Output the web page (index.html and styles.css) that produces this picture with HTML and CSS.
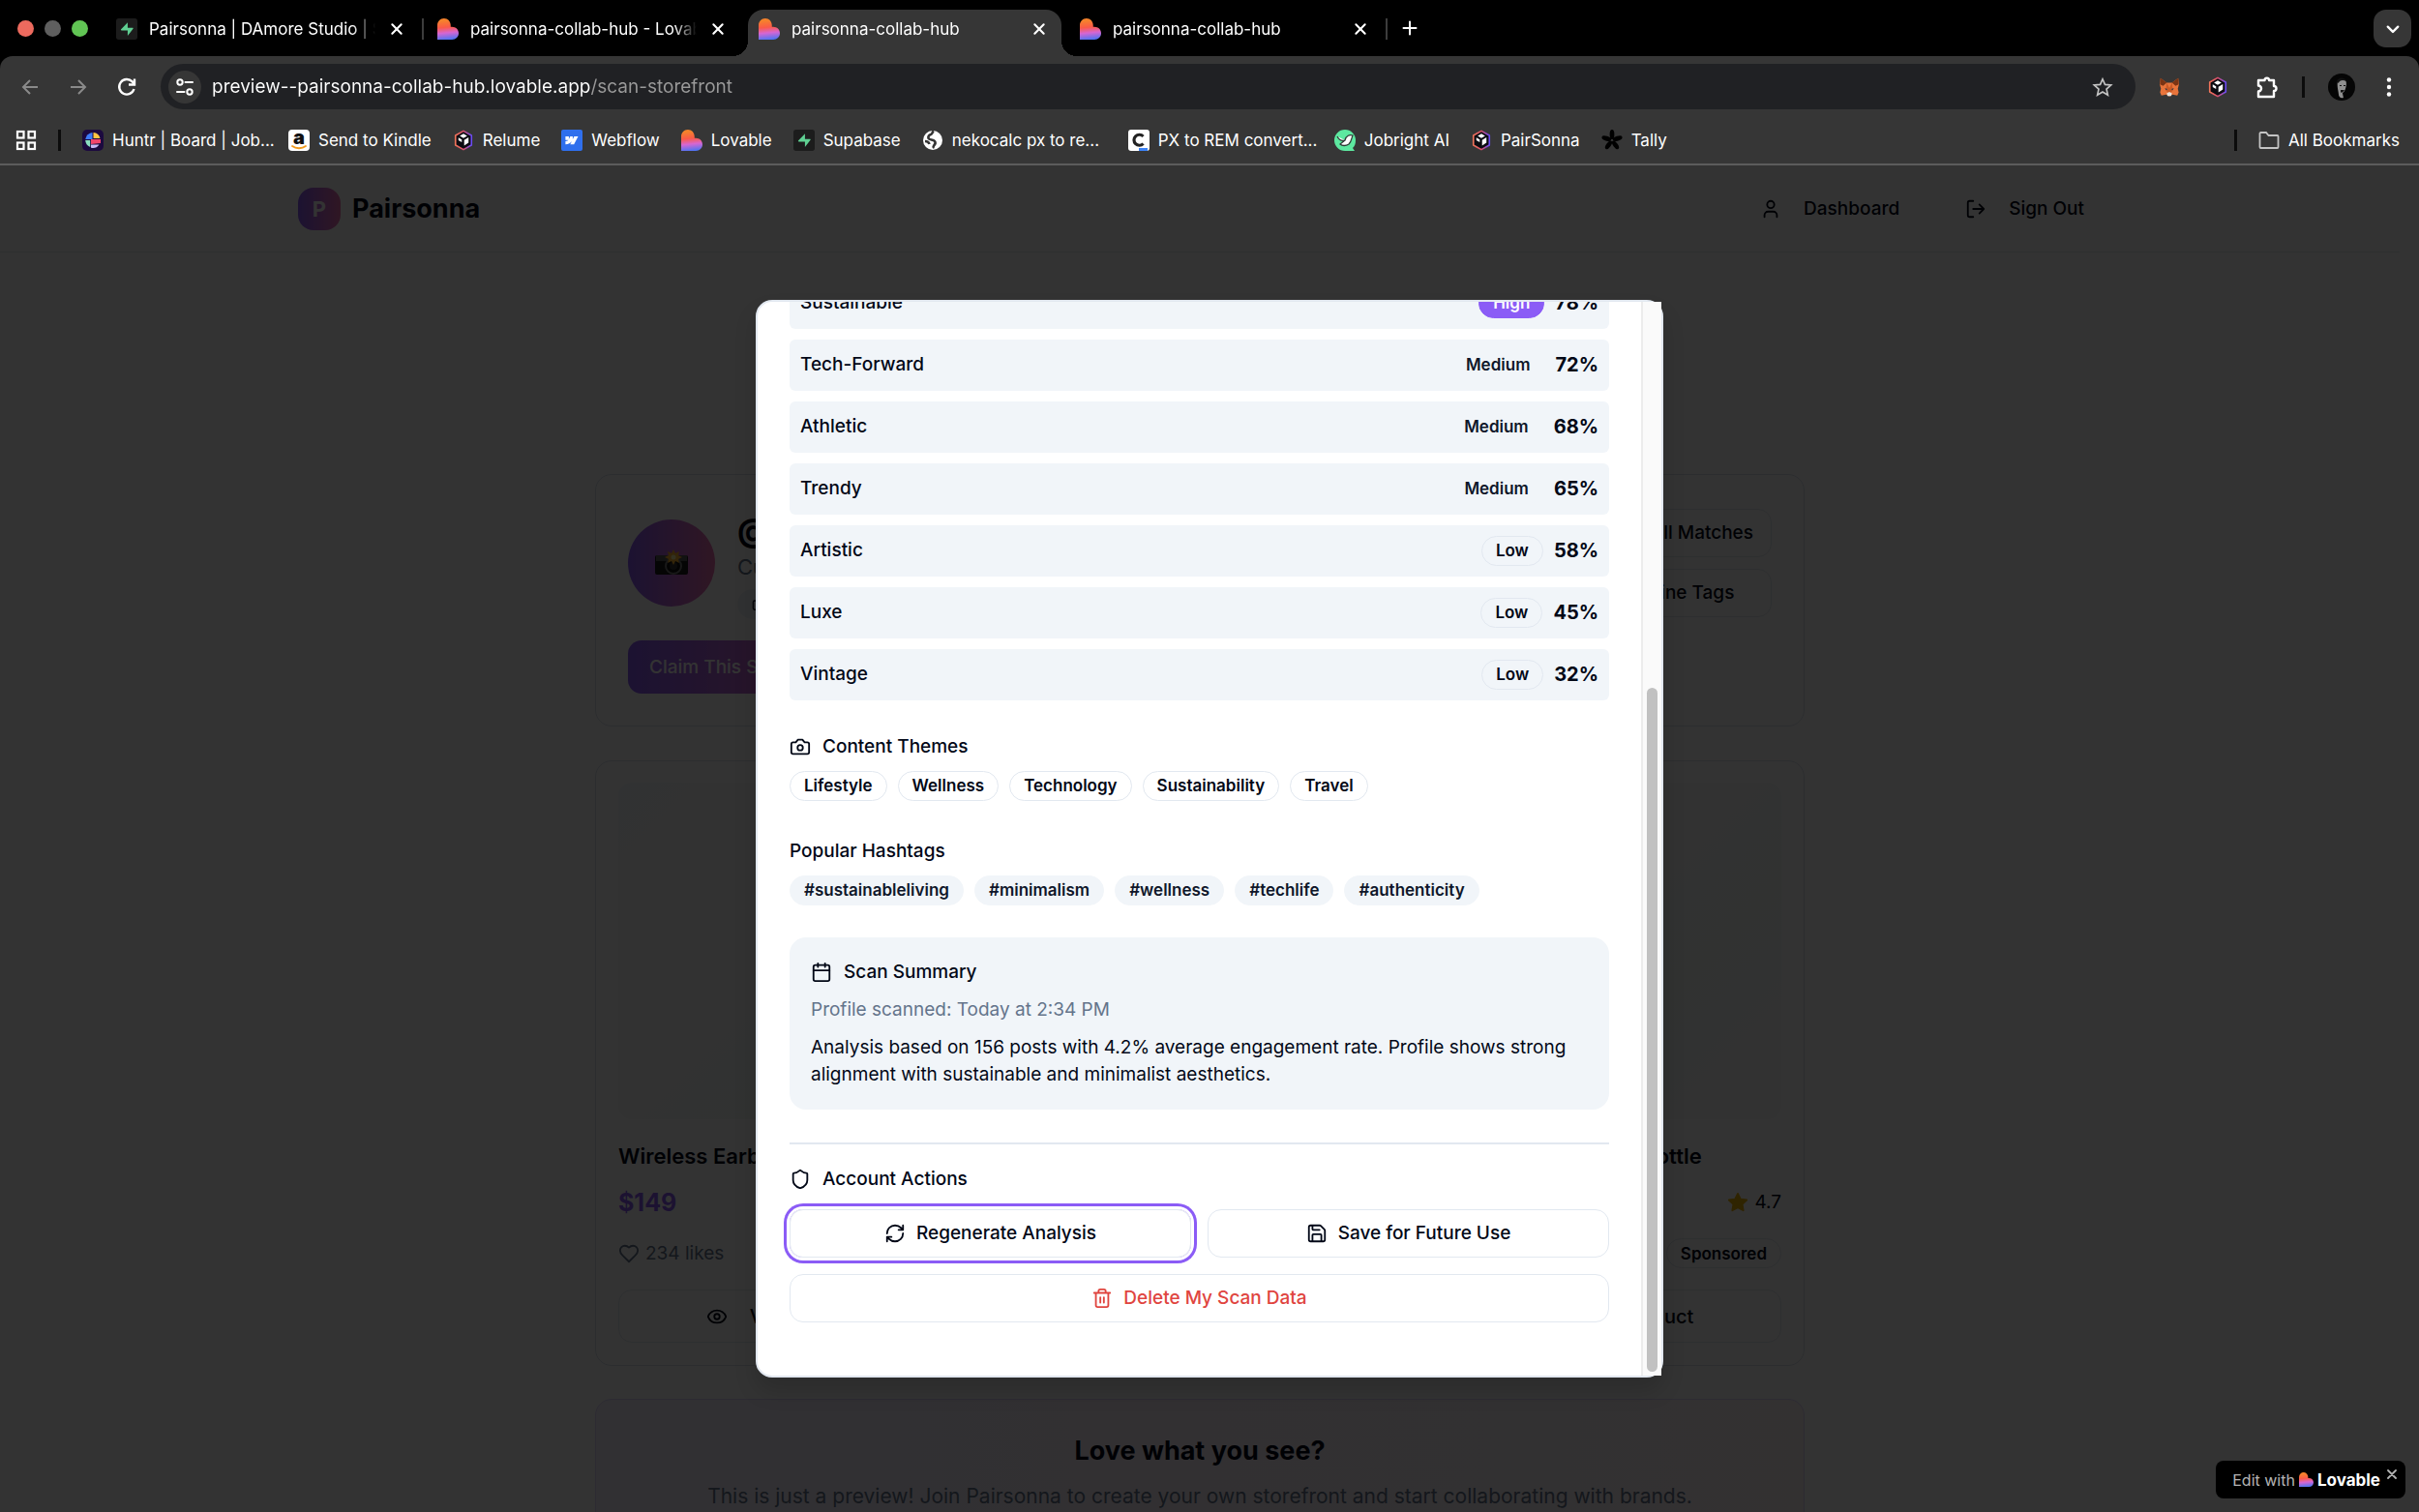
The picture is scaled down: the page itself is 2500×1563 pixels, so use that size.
FILE: index.html
```html
<!DOCTYPE html>
<html lang="en">
<head>
<meta charset="utf-8">
<title>pairsonna-collab-hub</title>
<link rel="stylesheet" href="styles.css">
</head>
<body>
<svg class="defs" aria-hidden="true">
  <defs>
    <linearGradient id="g-lov" x1="0.35" y1="0" x2="0.45" y2="1">
      <stop offset="0.1" stop-color="#f5822c"/><stop offset="0.42" stop-color="#fb5a48"/><stop offset="0.68" stop-color="#d766d2"/><stop offset="1" stop-color="#4f73f2"/>
    </linearGradient>
    <linearGradient id="g-cube" x1="0" y1="0" x2="1" y2="0">
      <stop offset="0" stop-color="#f0745a"/><stop offset="0.5" stop-color="#d94f6a"/><stop offset="1" stop-color="#6a4cf5"/>
    </linearGradient>
    <symbol id="i-lovable" viewBox="0 0 24 24"><path fill="url(#g-lov)" d="M0 24V8C0 3.600 3.100 0 7.500 0S15 3.500 15 8v1.500h1.500c4.300 0 7.500 3 7.500 7.200S20.800 24 16.500 24Z"/></symbol>
    <symbol id="i-supabase" viewBox="0 0 24 24"><rect width="24" height="24" rx="3" fill="#1c1c1c"/><path fill="#5fcf92" d="M13 4.500v6h5.500c.8 0 1 .7.6 1.200L13 19.500v-6H6.200c-.8 0-1-.7-.6-1.200Z"/></symbol>
    <symbol id="i-close" viewBox="0 0 12 12"><path d="M2 2l8 8M10 2l-8 8" fill="none" stroke="currentColor" stroke-width="1.800" stroke-linecap="round"/></symbol>
    <symbol id="i-plus" viewBox="0 0 16 16"><path d="M8 1.500v13M1.500 8h13" fill="none" stroke="currentColor" stroke-width="2" stroke-linecap="round"/></symbol>
    <symbol id="i-chev" viewBox="0 0 12 12"><path d="M1.500 4L6 8.500 10.500 4" fill="none" stroke="currentColor" stroke-width="2" stroke-linecap="round" stroke-linejoin="round"/></symbol>
    <symbol id="i-back" viewBox="0 0 22 22"><path d="M19 11H4M11 4l-7 7 7 7" fill="none" stroke="currentColor" stroke-width="2"/></symbol>
    <symbol id="i-fwd" viewBox="0 0 22 22"><path d="M3 11h15M11 4l7 7-7 7" fill="none" stroke="currentColor" stroke-width="2"/></symbol>
    <symbol id="i-reload" viewBox="0 0 22 22"><path d="M18.500 13a7.800 7.800 0 1 1-1.800-7.600l1.800 2" fill="none" stroke="currentColor" stroke-width="2.400"/><path d="M19 2.500v6h-6" fill="none" stroke="currentColor" stroke-width="2.400"/></symbol>
    <symbol id="i-tune" viewBox="0 0 20 20"><g fill="none" stroke="currentColor" stroke-width="2"><circle cx="5" cy="5" r="2.700"/><circle cx="15" cy="15" r="2.700"/><path d="M10.500 5H18M2 15h7.500" stroke-linecap="round"/></g></symbol>
    <symbol id="i-staro" viewBox="0 0 24 24"><path d="M12 3l2.700 6.200 6.800.6-5.100 4.500 1.500 6.700-5.900-3.500L6.100 21l1.500-6.700L2.500 9.800l6.800-.6Z" fill="none" stroke="currentColor" stroke-width="1.800"/></symbol>
    <symbol id="i-fox" viewBox="0 0 24 24"><path fill="#e8743b" d="M2 2l7 5h6l7-5 .8 7-1.300 5 1 4-1.500 3.500-5.500-1L12 22.500 8.500 20.500 3 21.500 1.500 18l1-4-1.300-5Z"/><path fill="#7a3414" d="M2 2l7 5-4 3.500-3.500-1.500ZM22 2l-7 5 4 3.500 3.500-1.500Z"/><path fill="#c95a26" d="M9 7l3 6 3-6 1 9-4 3-4-3Z"/><path fill="#23344a" d="M7 13l3 1.500-2 .8ZM17 13l-3 1.500 2 .8Z"/><path fill="#e6e0da" d="M9 19l3-1.500 3 1.500-1 3h-4Z"/></symbol>
    <symbol id="i-cube" viewBox="0 0 24 24"><path d="M12 1.500l9 5v11l-9 5-9-5v-11Z" fill="#0c0c12" stroke="url(#g-cube)" stroke-width="1.800" stroke-linejoin="round"/><path fill="#fff" d="M12 4.500l4.200 2.600-4.200 2.500-4.200-2.500ZM12.800 11.600l4.900-2.800v6l-4.900 3.200ZM6.300 9l3.800 2.200v3l-3.800-2.200Z"/></symbol>
    <symbol id="i-puzzle" viewBox="0 0 24 24"><path d="M3 5h6.500a2.300 2.300 0 1 1 4.600 0H19v6a2.400 2.400 0 1 1 0 5v6H3v-5.500a3 3 0 0 0 0-6Z" fill="none" stroke="currentColor" stroke-width="2.400" stroke-linejoin="round"/></symbol>
    <symbol id="i-face" viewBox="0 0 28 28"><circle cx="14" cy="14" r="14" fill="#050505"/><path fill="#8f8f8f" d="M10 8c1-2.500 7-3 8.500 0 .8 2 .4 5-.6 8-.6 1.800-1.600 3.500-3 4l1 5c-3 1-5-1-5-4 0-2-2-8-.9-13Z"/><path fill="#111" d="M9 8c1-4 8-5 10 0-2-1-5-1.500-7 0l-1.500 2ZM13 17h4l-2 2.500h-2ZM12 12h2v1h-2ZM16 12h2v1h-2Z"/></symbol>
    <symbol id="i-dots" viewBox="0 0 22 22"><g fill="currentColor"><circle cx="11" cy="3.500" r="2.200"/><circle cx="11" cy="11" r="2.200"/><circle cx="11" cy="18.500" r="2.200"/></g></symbol>
    <symbol id="i-apps" viewBox="0 0 22 22"><g fill="none" stroke="currentColor" stroke-width="2.200"><rect x="2" y="2" width="6.500" height="6.500"/><rect x="13.500" y="2" width="6.500" height="6.500"/><rect x="2" y="13.500" width="6.500" height="6.500"/><rect x="13.500" y="13.500" width="6.500" height="6.500"/></g></symbol>
    <symbol id="i-huntr" viewBox="0 0 22 22"><rect width="22" height="22" rx="5" fill="#1c0a3f"/><path fill="#3e7bfa" d="M10.500 3v7H3.200A8 8 0 0 1 10.500 3Z"/><path fill="#ffc542" d="M11.500 3v6h7A8 8 0 0 0 11.500 3Z"/><path fill="#8be0c0" d="M3.200 11h5v7A8 8 0 0 1 3.200 11Z"/><path fill="#f2456b" d="M9 10h10v4l-10 1Z"/><path fill="#c9b8f5" d="M9 15.500h8.500A8 8 0 0 1 9 18.700Z"/></symbol>
    <symbol id="i-amazon" viewBox="0 0 22 22"><rect width="22" height="22" rx="4" fill="#fff"/><text x="11" y="15" text-anchor="middle" font-family="Inter, sans-serif" font-weight="900" font-size="20" fill="#111">a</text><path d="M4 17c4 3 10 3 14 0" fill="none" stroke="#f29b1d" stroke-width="1.800" stroke-linecap="round"/></symbol>
    <symbol id="i-webflow" viewBox="0 0 22 22"><rect width="22" height="22" rx="2" fill="#2f6fed"/><path fill="#fff" d="M17.500 7l-4.300 8.300H9.300L11 12c-1.400 1.900-3.500 3.100-6.600 3.300V12.100S6.400 12 7.500 10.800H4.400V7h3.500v2.900L9.300 7h2.600v2.900L13.400 7Z"/></symbol>
    <symbol id="i-globe" viewBox="0 0 22 22"><circle cx="11" cy="11" r="10" fill="#fff"/><path d="M12 1.500c-2 1-1 3-3 3.500-2 .5-3 2-2.500 4 1 2 5 1 6.500 3s.5 3-.5 4-.5 2-1.500 3M3 12c2 0 4 1 4.500 3" fill="none" stroke="#353535" stroke-width="2.600"/></symbol>
    <symbol id="i-px" viewBox="0 0 22 22"><rect width="22" height="22" rx="3" fill="#fff"/><path d="M15.500 7A5.500 5.500 0 1 0 15.500 14.500" fill="none" stroke="#222" stroke-width="3.200"/><rect x="11" y="19" width="9" height="3" fill="#3b82f6"/></symbol>
    <symbol id="i-jobright" viewBox="0 0 22 22"><path fill="#5de8a0" d="M11 0a11 11 0 0 1 11 11c0 4-1 6-3 8l2 3H11A11 11 0 0 1 11 0Z"/><path d="M3 7c2 4 5 5 8 4 1-5 5-6 8-5-1 2-1 6-4 9-3 2-7 2-9 0l5-4" fill="#fff" stroke="#2d3b35" stroke-width="1.300"/></symbol>
    <symbol id="i-tally" viewBox="0 0 22 22"><g fill="#000"><ellipse cx="11" cy="5" rx="2.400" ry="5"/><ellipse cx="11" cy="5" rx="2.400" ry="5" transform="rotate(72 11 11)"/><ellipse cx="11" cy="5" rx="2.400" ry="5" transform="rotate(144 11 11)"/><ellipse cx="11" cy="5" rx="2.400" ry="5" transform="rotate(216 11 11)"/><ellipse cx="11" cy="5" rx="2.400" ry="5" transform="rotate(288 11 11)"/></g></symbol>
    <symbol id="i-folder" viewBox="0 0 22 22"><path d="M1.500 4a1 1 0 0 1 1-1H8l2.500 3h9a1 1 0 0 1 1 1v11a1 1 0 0 1-1 1h-17a1 1 0 0 1-1-1Z" fill="none" stroke="currentColor" stroke-width="1.800"/></symbol>
    <symbol id="i-user" viewBox="0 0 24 24"><path d="M19 21v-2a4 4 0 0 0-4-4H9a4 4 0 0 0-4 4v2"/><circle cx="12" cy="7" r="4"/></symbol>
    <symbol id="i-logout" viewBox="0 0 24 24"><path d="M9 21H5a2 2 0 0 1-2-2V5a2 2 0 0 1 2-2h4M16 17l5-5-5-5M21 12H9"/></symbol>
    <symbol id="i-camera" viewBox="0 0 24 24"><path d="M14.500 4h-5L7 7H4a2 2 0 0 0-2 2v9a2 2 0 0 0 2 2h16a2 2 0 0 0 2-2V9a2 2 0 0 0-2-2h-3Z"/><circle cx="12" cy="13" r="3"/></symbol>
    <symbol id="i-calendar" viewBox="0 0 24 24"><path d="M8 2v4M16 2v4M3 10h18"/><rect x="3" y="4" width="18" height="18" rx="2"/></symbol>
    <symbol id="i-shield" viewBox="0 0 24 24"><path d="M20 13c0 5-3.500 7.500-7.660 8.950a1 1 0 0 1-.67-.01C7.500 20.500 4 18 4 13V6a1 1 0 0 1 1-1c2 0 4.500-1.200 6.240-2.720a1.170 1.170 0 0 1 1.520 0C14.510 3.810 17 5 19 5a1 1 0 0 1 1 1Z"/></symbol>
    <symbol id="i-refresh" viewBox="0 0 24 24"><path d="M3 12a9 9 0 0 1 9-9 9.750 9.750 0 0 1 6.740 2.740L21 8M21 3v5h-5M21 12a9 9 0 0 1-9 9 9.750 9.750 0 0 1-6.740-2.740L3 16M8 16H3v5"/></symbol>
    <symbol id="i-save" viewBox="0 0 24 24"><path d="M15.200 3a2 2 0 0 1 1.400.6l3.800 3.800a2 2 0 0 1 .6 1.400V19a2 2 0 0 1-2 2H5a2 2 0 0 1-2-2V5a2 2 0 0 1 2-2ZM17 21v-7a1 1 0 0 0-1-1H8a1 1 0 0 0-1 1v7M7 3v4a1 1 0 0 0 1 1h7"/></symbol>
    <symbol id="i-trash" viewBox="0 0 24 24"><path d="M3 6h18M19 6v14a2 2 0 0 1-2 2H7a2 2 0 0 1-2-2V6M8 6V4a2 2 0 0 1 2-2h4a2 2 0 0 1 2 2v2M10 11v6M14 11v6"/></symbol>
    <symbol id="i-heart" viewBox="0 0 24 24"><path d="M19 14c1.490-1.460 3-3.210 3-5.500A5.500 5.500 0 0 0 16.500 3c-1.760 0-3 .5-4.500 2-1.500-1.500-2.740-2-4.500-2A5.500 5.500 0 0 0 2 8.500c0 2.300 1.500 4.050 3 5.500l7 7Z"/></symbol>
    <symbol id="i-eye" viewBox="0 0 24 24"><path d="M2.060 12.350a1 1 0 0 1 0-.7 10.750 10.750 0 0 1 19.880 0 1 1 0 0 1 0 .7 10.750 10.750 0 0 1-19.880 0"/><circle cx="12" cy="12" r="3"/></symbol>
    <symbol id="i-star" viewBox="0 0 24 24"><path d="M12 2l3.090 6.260L22 9.270l-5 4.870 1.180 6.880L12 17.770l-6.180 3.250L7 14.140 2 9.270l6.910-1.010Z"/></symbol>
  </defs>
</svg>

<header class="chrome">
  <div class="tabstrip">
    <div class="lights"><span class="light light-red"></span><span class="light light-grey"></span><span class="light light-green"></span></div>
    <div class="tabs">
      <div class="tab"><svg class="fav"><use href="#i-supabase"/></svg><span class="tab-label">Pairsonna | DAmore Studio | S</span><button class="icon-btn" aria-label="Close tab"><svg class="x"><use href="#i-close"/></svg></button></div>
      <span class="tab-sep"></span>
      <div class="tab"><svg class="fav"><use href="#i-lovable"/></svg><span class="tab-label">pairsonna-collab-hub - Lovable</span><button class="icon-btn" aria-label="Close tab"><svg class="x"><use href="#i-close"/></svg></button></div>
      <span class="tab-sep tab-sep-off"></span>
      <div class="tab tab-active"><svg class="fav"><use href="#i-lovable"/></svg><span class="tab-label">pairsonna-collab-hub</span><button class="icon-btn" aria-label="Close tab"><svg class="x"><use href="#i-close"/></svg></button></div>
      <span class="tab-sep tab-sep-off"></span>
      <div class="tab"><svg class="fav"><use href="#i-lovable"/></svg><span class="tab-label">pairsonna-collab-hub</span><button class="icon-btn" aria-label="Close tab"><svg class="x"><use href="#i-close"/></svg></button></div>
      <span class="tab-sep"></span>
      <button class="icon-btn new-tab" aria-label="New tab"><svg><use href="#i-plus"/></svg></button>
    </div>
    <button class="tab-search" aria-label="Search tabs"><svg class="x"><use href="#i-chev"/></svg></button>
  </div>
  <div class="toolbar">
    <div class="nav-row">
      <div class="nav-group">
        <button class="icon-btn dim" aria-label="Back"><svg><use href="#i-back"/></svg></button>
        <button class="icon-btn dim" aria-label="Forward"><svg><use href="#i-fwd"/></svg></button>
        <button class="icon-btn" aria-label="Reload"><svg><use href="#i-reload"/></svg></button>
      </div>
      <div class="omnibox">
        <button class="site-info" aria-label="View site information"><svg><use href="#i-tune"/></svg></button>
        <input class="url" type="text" aria-label="Address" value="preview--pairsonna-collab-hub.lovable.app/scan-storefront">
        <button class="icon-btn star" aria-label="Bookmark this tab"><svg><use href="#i-staro"/></svg></button>
      </div>
      <div class="nav-group">
        <button class="icon-btn" aria-label="MetaMask"><svg><use href="#i-fox"/></svg></button>
        <button class="icon-btn" aria-label="Relume"><svg><use href="#i-cube"/></svg></button>
        <button class="icon-btn" aria-label="Extensions"><svg class="lg"><use href="#i-puzzle"/></svg></button>
      </div>
      <span class="bar-sep"></span>
      <button class="icon-btn" aria-label="Profile"><svg class="face"><use href="#i-face"/></svg></button>
      <button class="icon-btn" aria-label="Menu"><svg><use href="#i-dots"/></svg></button>
    </div>
    <nav class="bookmarks">
      <button class="icon-btn" aria-label="Apps"><svg><use href="#i-apps"/></svg></button>
      <span class="bar-sep"></span>
      <a class="bm bm-wide" href="#"><svg><use href="#i-huntr"/></svg><span>Huntr | Board | Job...</span></a>
      <a class="bm" href="#"><svg><use href="#i-amazon"/></svg><span>Send to Kindle</span></a>
      <a class="bm" href="#"><svg><use href="#i-cube"/></svg><span>Relume</span></a>
      <a class="bm" href="#"><svg><use href="#i-webflow"/></svg><span>Webflow</span></a>
      <a class="bm" href="#"><svg><use href="#i-lovable"/></svg><span>Lovable</span></a>
      <a class="bm" href="#"><svg><use href="#i-supabase"/></svg><span>Supabase</span></a>
      <a class="bm bm-wide" href="#"><svg><use href="#i-globe"/></svg><span>nekocalc px to re...</span></a>
      <a class="bm bm-wide" href="#"><svg><use href="#i-px"/></svg><span>PX to REM convert...</span></a>
      <a class="bm" href="#"><svg><use href="#i-jobright"/></svg><span>Jobright AI</span></a>
      <a class="bm" href="#"><svg><use href="#i-cube"/></svg><span>PairSonna</span></a>
      <a class="bm" href="#"><svg><use href="#i-tally"/></svg><span>Tally</span></a>
      <span class="bar-sep push"></span>
      <button class="bm folder"><svg><use href="#i-folder"/></svg><span>All Bookmarks</span></button>
    </nav>
  </div>
</header>

<div class="viewport">
  <div class="page">
    <div class="site-header">
      <div class="container">
        <a class="brand" href="#"><span class="brand-mark">P</span><span>Pairsonna</span></a>
        <div class="site-nav">
          <a class="nav-link" href="#"><svg class="ico"><use href="#i-user"/></svg>Dashboard</a>
          <button class="nav-link"><svg class="ico"><use href="#i-logout"/></svg>Sign Out</button>
        </div>
      </div>
    </div>
    <main class="storefront">
      <section class="card profile">
        <div class="profile-top">
          <div class="avatar">
            <svg viewBox="0 0 34 28"><rect y="6" width="34" height="20" rx="2" fill="#1c1c1c"/><rect x="1" y="6" width="32" height="6" fill="#5a5a5a"/><circle cx="19" cy="17" r="8" fill="#111" stroke="#777" stroke-width="2"/><circle cx="19" cy="17" r="4" fill="#333"/><path fill="#ffb52e" d="M19 0l2 4 4-2-1 4 4 2-4 2 1 4-4-2-2 4-2-4-4 2 1-4-4-2 4-2-1-4 4 2Z"/><circle cx="19" cy="8" r="2.500" fill="#fff2a0"/></svg>
          </div>
          <div class="profile-text">
            <h1>@creator</h1>
            <p>Curated storefront</p>
            <span class="badge badge-soft"><svg class="ico sm"><use href="#i-camera"/></svg>Demo</span>
          </div>
          <div class="profile-actions">
            <button class="btn btn-sm">See All Matches</button>
            <button class="btn btn-sm">Refine Tags</button>
          </div>
        </div>
        <button class="btn-claim">Claim This Storefront</button>
      </section>
      <section class="products">
        <article class="card product">
          <div class="photo photo-a"></div>
          <h3>Wireless Earbuds Pro</h3>
          <div class="line"><span class="price">$149</span></div>
          <div class="line meta"><span class="likes"><svg class="ico"><use href="#i-heart"/></svg>234 likes</span></div>
          <button class="btn btn-view"><svg class="ico"><use href="#i-eye"/></svg>View Product</button>
        </article>
        <article class="card product">
          <div class="photo photo-a"></div>
          <h3>Yoga Mat</h3>
          <div class="line"><span class="price">$89</span></div>
          <div class="line meta"><span class="likes"><svg class="ico"><use href="#i-heart"/></svg>189 likes</span></div>
          <button class="btn btn-view"><svg class="ico"><use href="#i-eye"/></svg>View Product</button>
        </article>
        <article class="card product">
          <div class="photo photo-b"></div>
          <h3>Eco-Friendly Water Bottle</h3>
          <div class="line"><span class="price">$35</span><span class="rating"><svg class="ico gold"><use href="#i-star"/></svg>4.7</span></div>
          <div class="line meta"><span class="likes"><svg class="ico"><use href="#i-heart"/></svg>156 likes</span><span class="badge">Sponsored</span></div>
          <button class="btn btn-view"><svg class="ico"><use href="#i-eye"/></svg>View Product</button>
        </article>
      </section>
      <section class="card cta">
        <h2>Love what you see?</h2>
        <p>This is just a preview! Join Pairsonna to create your own storefront and start collaborating with brands.</p>
      </section>
    </main>
  </div>

  <div class="overlay">
    <div class="dialog" role="dialog" aria-label="Profile analysis">
      <div class="dialog-body">
        <ul class="scores">
          <li><span>Sustainable</span><span class="badge badge-high">High</span><b>78%</b></li>
          <li><span>Tech-Forward</span><span class="badge badge-soft">Medium</span><b>72%</b></li>
          <li><span>Athletic</span><span class="badge badge-soft">Medium</span><b>68%</b></li>
          <li><span>Trendy</span><span class="badge badge-soft">Medium</span><b>65%</b></li>
          <li><span>Artistic</span><span class="badge">Low</span><b>58%</b></li>
          <li><span>Luxe</span><span class="badge">Low</span><b>45%</b></li>
          <li><span>Vintage</span><span class="badge">Low</span><b>32%</b></li>
        </ul>
        <section class="themes">
          <h4><svg class="ico"><use href="#i-camera"/></svg>Content Themes</h4>
          <div class="chips"><span class="badge">Lifestyle</span><span class="badge">Wellness</span><span class="badge">Technology</span><span class="badge">Sustainability</span><span class="badge">Travel</span></div>
        </section>
        <section class="hashtags">
          <h4>Popular Hashtags</h4>
          <div class="chips"><span class="badge badge-soft">#sustainableliving</span><span class="badge badge-soft">#minimalism</span><span class="badge badge-soft">#wellness</span><span class="badge badge-soft">#techlife</span><span class="badge badge-soft">#authenticity</span></div>
        </section>
        <section class="summary">
          <h4><svg class="ico"><use href="#i-calendar"/></svg>Scan Summary</h4>
          <p class="muted">Profile scanned: Today at 2:34 PM</p>
          <p>Analysis based on 156 posts with 4.2% average engagement rate. Profile shows strong alignment with sustainable and minimalist aesthetics.</p>
        </section>
        <section class="account">
          <h4><svg class="ico"><use href="#i-shield"/></svg>Account Actions</h4>
          <div class="actions">
            <button class="btn btn-act focused"><svg class="ico"><use href="#i-refresh"/></svg>Regenerate Analysis</button>
            <button class="btn btn-act"><svg class="ico"><use href="#i-save"/></svg>Save for Future Use</button>
            <button class="btn btn-act danger"><svg class="ico"><use href="#i-trash"/></svg>Delete My Scan Data</button>
          </div>
        </section>
      </div>
      <div class="scroll-track"><div class="scroll-thumb"></div></div>
    </div>
  </div>

  <aside class="lov-badge">
    <a href="#">Edit with <svg><use href="#i-lovable"/></svg><strong>Lovable</strong></a>
    <button class="icon-btn" aria-label="Dismiss"><svg><use href="#i-close"/></svg></button>
  </aside>
</div>
</body>
</html>
```
FILE: styles.css
```css
* { box-sizing: border-box; margin: 0; padding: 0; }
body {
  display: flex;
  flex-direction: column;
  height: 100vh;
  overflow: hidden;
  background: #000;
  color: #020817;
  font-family: Inter, "Liberation Sans", sans-serif;
  font-size: 19px;
  line-height: 28px;
}
button { font: inherit; color: inherit; background: none; border: 0; }
a { color: inherit; text-decoration: none; }
svg { display: block; flex: none; width: 22px; height: 22px; }
.defs { position: absolute; width: 0; height: 0; }
.icon-btn { display: flex; flex: none; }

/* Browser frame */
.chrome { color: #fff; font-size: 17px; line-height: 24px; }
.tabstrip { display: flex; align-items: flex-end; height: 58px; padding: 0 8px 0 18px; }
.lights { display: flex; gap: 11px; align-items: center; height: 48px; padding-bottom: 9px; }
.light { width: 17px; height: 17px; border-radius: 50%; }
.light-red { background: #ed6a5e; }
.light-grey { background: #5f5f5f; }
.light-green { background: #61c554; }
.tabs { display: flex; flex: 1; align-items: center; min-width: 0; margin-left: 18px; }
.tab {
  position: relative;
  display: flex;
  flex: 0 1 324px;
  align-items: center;
  min-width: 0;
  height: 48px;
  padding: 0 16px 9px 11px;
}
.tab-label {
  flex: 1;
  min-width: 0;
  margin: 0 15px 0 12px;
  overflow: hidden;
  white-space: nowrap;
  -webkit-mask-image: linear-gradient(90deg, #000 90%, transparent);
  mask-image: linear-gradient(90deg, #000 90%, transparent);
}
.x { width: 14px; height: 14px; }
.tab-active { background: #363636; border-radius: 16px 16px 0 0; }
.tab-active::before, .tab-active::after { content: ""; position: absolute; bottom: 0; width: 16px; height: 16px; }
.tab-active::before { right: 100%; background: radial-gradient(circle at 0 0, transparent 16px, #363636 16px); }
.tab-active::after { left: 100%; background: radial-gradient(circle at 100% 0, transparent 16px, #363636 16px); }
.tab-sep { flex: none; width: 2px; height: 22px; margin: 0 3px 9px; background: #3c3c3c; }
.tab-sep-off { background: none; }
.new-tab { margin: 0 0 10px 12px; }
.new-tab svg { width: 16px; height: 16px; }
.tab-search {
  display: flex;
  align-items: center;
  justify-content: center;
  width: 39px;
  height: 39px;
  margin-bottom: 9px;
  background: #363636;
  border-radius: 13px;
}
.toolbar { background: #363636; border-bottom: 2px solid #5c5c5c; border-radius: 13px 13px 0 0; }
.nav-row { display: flex; align-items: center; gap: 24px; padding: 8px 20px 0; }
.nav-group { display: flex; align-items: center; gap: 28px; }
.dim { color: #8a8a8a; }
.omnibox { display: flex; flex: 1; align-items: center; height: 47px; padding: 0 23px 0 8px; background: #202124; border-radius: 24px; }
.site-info { display: flex; align-items: center; justify-content: center; width: 34px; height: 34px; background: #363636; border-radius: 50%; }
.site-info svg { width: 20px; height: 20px; }
.url {
  flex: 1;
  min-width: 0;
  height: 34px;
  margin-left: 11px;
  border: 0;
  outline: 0;
  font: inherit;
  font-size: 19px;
  color: transparent;
  background: linear-gradient(90deg, #fff 392px, #9a9a9a 392px);
  -webkit-background-clip: text;
  background-clip: text;
}
.star { color: #c4c4c4; }
.lg { width: 24px; height: 24px; }
.face { width: 28px; height: 28px; }
.bar-sep { flex: none; width: 3px; height: 22px; background: #0c0c0c; }
.bookmarks { display: flex; gap: 22px; align-items: center; height: 56px; padding: 8px 20px 0 16px; white-space: nowrap; }
.bm { display: flex; flex: none; gap: 9px; align-items: center; }
.bm-wide { width: 191px; }
.push { margin-left: auto; }
.folder svg { color: #c4c4c4; }

/* Page */
.viewport { position: relative; flex: 1; min-height: 0; overflow: hidden; background: #fff; }
.page { margin-right: 20px; }
.ico { fill: none; stroke: currentColor; stroke-width: 2; stroke-linecap: round; stroke-linejoin: round; }
.sm { width: 17px; height: 17px; }
.gold { fill: #eab308; stroke: #eab308; }
.site-header { border-bottom: 1px solid #e2e8f0; }
.container { display: flex; align-items: center; justify-content: space-between; height: 89px; max-width: 1908px; margin: 0 auto; padding: 0 18px 0 22px; }
.brand { display: flex; gap: 12px; align-items: center; font-size: 27px; font-weight: 700; }
.brand-mark {
  display: flex;
  align-items: center;
  justify-content: center;
  width: 44px;
  height: 44px;
  border-radius: 16px;
  background: linear-gradient(90deg, #8b5cf6, #ec6fb0);
  color: #fff;
  font-size: 22px;
}
.site-nav { display: flex; gap: 24px; }
.nav-link { display: flex; gap: 23px; align-items: center; padding: 0 22px; font-weight: 500; }
.storefront { max-width: 1250px; margin: 0 auto; padding-top: 229px; }
.card { border: 1px solid #dbe2ec; border-radius: 17px; }
.profile { padding: 33px; }
.profile-top { display: flex; gap: 23px; align-items: center; }
.avatar { display: flex; flex: none; align-items: center; justify-content: center; width: 90px; height: 90px; border-radius: 50%; background: linear-gradient(90deg, #8b5cf6, #ec6fb0); }
.avatar svg { width: 34px; height: 28px; }
.profile-text { display: flex; flex: 1; flex-direction: column; align-items: flex-start; }
.profile-text h1 { font-size: 33px; line-height: 48px; }
.profile-text p { margin-bottom: 9px; font-size: 22px; color: #64748b; }
.profile-actions { display: flex; flex-direction: column; gap: 12px; }
.btn {
  display: flex;
  gap: 23px;
  align-items: center;
  justify-content: center;
  width: 100%;
  height: 55px;
  padding: 0 18px;
  border: 1px solid #e2e8f0;
  border-radius: 14px;
  font-weight: 500;
}
.btn-sm { height: 50px; }
.btn-view { font-size: 20px; }
.btn-claim { height: 55px; margin-top: 22px; padding: 0 22px; border-radius: 14px; background: linear-gradient(90deg, #8b5cf6, #ec6fb0); color: #fff; font-weight: 500; }
.products { display: grid; grid-template-columns: repeat(3, 1fr); gap: 22px; margin-top: 35px; }
.product { padding: 22px 23px 23px; }
.photo { height: 348px; border-radius: 14px; }
.photo-a { background: linear-gradient(135deg, #f5f8fc, #fbfaf9 35%, #f3f8f6 70%); }
.photo-b { background: linear-gradient(135deg, #f5f8fc, #fbfaf9 30%, #f3f8f6 65%, #fbfafa); }
.product h3 { margin: 24px 0 18px; font-size: 22px; font-weight: 600; white-space: nowrap; }
.line { display: flex; align-items: center; justify-content: space-between; height: 31px; margin-bottom: 22px; }
.price { font-size: 25px; font-weight: 700; color: #8b5cf6; }
.rating, .likes { display: flex; gap: 6px; align-items: center; }
.likes { color: #64748b; }
.cta { margin-top: 34px; padding: 33px; border-color: #e0d5fb; background: linear-gradient(90deg, #f3effe, #fdf3f6); text-align: center; }
.cta h2 { margin: 6px 0 19px; font-size: 27px; }
.cta p { font-size: 21px; color: #64748b; }

/* Badges */
.badge {
  display: inline-flex;
  flex: none;
  gap: 6px;
  align-items: center;
  height: 31px;
  padding: 0 14px;
  border: 1px solid #e2e8f0;
  border-radius: 16px;
  font-size: 17px;
  font-weight: 600;
}
.badge-soft { border-color: #f1f5f9; background: #f1f5f9; color: #0f172a; }
.badge-high { border-color: #8b5cf6; background: #8b5cf6; color: #fff; }

/* Dialog */
.overlay { position: absolute; inset: 0; display: flex; align-items: center; justify-content: center; background: rgba(0, 0, 0, .8); }
.dialog { display: flex; width: 938px; max-width: 100%; height: 80%; border: 2px solid #e2e8f0; border-radius: 17px; background: #fff; box-shadow: 0 14px 22px rgba(0, 0, 0, .15); }
.dialog-body { display: flex; flex: 1; flex-direction: column; justify-content: flex-end; min-width: 0; padding: 0 33px 55px; overflow: hidden; border-radius: 15px 0 0 15px; }
.scroll-track { flex: none; width: 21px; padding: 399px 4px 4px 4px; border-left: 2px solid #ececec; background: #fafafa; }
.scroll-thumb { height: 100%; border-radius: 6px; background: #c1c1c1; }
.scores { display: flex; flex-direction: column; gap: 11px; list-style: none; }
.scores li { display: flex; gap: 11px; align-items: center; height: 53px; padding: 0 11px; border-radius: 6px; background: #f1f5f9; font-weight: 500; }
.scores li span:first-child { flex: 1; }
.scores b { font-size: 20px; font-weight: 700; }
h4 { display: flex; gap: 12px; align-items: center; font-size: 19px; font-weight: 500; }
.themes { margin-top: 34px; }
.hashtags { margin-top: 38px; }
.chips { display: flex; flex-wrap: wrap; gap: 11px; margin-top: 11px; }
.summary { display: flex; flex-direction: column; gap: 11px; margin-top: 33px; padding: 22px; border-radius: 17px; background: #f1f5f9; }
.muted { color: #64748b; }
.account { margin-top: 34px; padding-top: 22px; border-top: 2px solid #e2e8f0; }
.actions { display: grid; grid-template-columns: 1fr 1fr; gap: 17px; margin-top: 17px; }
.btn-act { gap: 11px; height: 50px; }
.focused { box-shadow: 0 0 0 3px #fff, 0 0 0 6px #8b5cf6; }
.danger { grid-column: 1 / -1; color: #e0453f; }

/* Corner badge */
.lov-badge { position: absolute; right: 14px; bottom: 14px; display: flex; gap: 6px; height: 39px; padding: 0 8px 0 17px; border-radius: 8px; background: #000; color: #b4b4b4; font-size: 16px; }
.lov-badge a { display: flex; gap: 4px; align-items: center; }
.lov-badge a svg { width: 15px; height: 15px; }
.lov-badge strong { color: #fff; font-size: 17px; font-weight: 700; }
.lov-badge .icon-btn { margin-top: 8px; }
.lov-badge .icon-btn svg { width: 12px; height: 12px; }
```
